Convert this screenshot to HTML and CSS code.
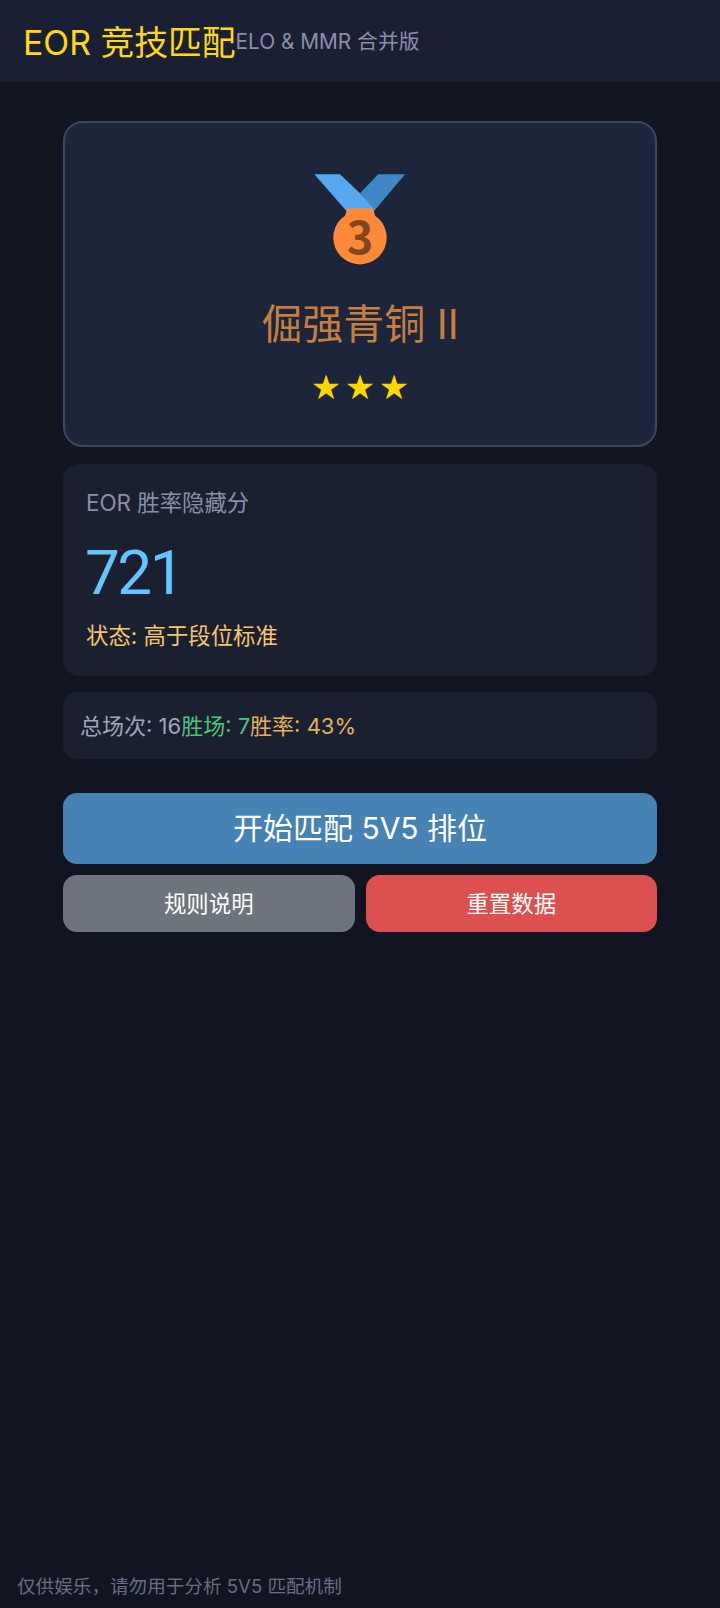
FILE: index.html
```html
<!DOCTYPE html>
<html lang="zh-CN">

<head>
  <meta charset="UTF-8">
  <meta name="viewport" content="width=device-width, initial-scale=1.0">
  <title>EOR 竞技匹配</title>
  <link rel="stylesheet" href="styles.css">
</head>

<body>
  <header class="top-bar">
    <h1 class="top-title">EOR 竞技匹配</h1>
    <span class="top-sub">ELO &amp; MMR 合并版</span>
  </header>

  <main class="main-col">
    <section class="rank-card">
      <svg class="rank-medal" viewBox="0 0 90 90" aria-hidden="true">
        <polygon points="63.3,0.3 90,0.3 58.3,38 45,19.3" fill="#3f87c4" />
        <polygon points="-0.7,0.3 25,0.3 45,19.3 58.3,34.3 58.3,38 32.3,38" fill="#55a8ee" />
        <polygon points="32.3,34.3 58.3,34.3 60,42 30,42" fill="#fd8a39" />
        <circle cx="45" cy="63.7" r="26.7" fill="#fd8a39" />
        <text class="rank-medal-num" x="45" y="79.5" text-anchor="middle">3</text>
      </svg>
      <div class="rank-name">倔强青铜 II</div>
      <div class="rank-stars">★★★</div>
    </section>

    <section class="mmr-card">
      <div class="mmr-label">EOR 胜率隐藏分</div>
      <div class="mmr-value">721</div>
      <div class="mmr-state">状态: 高于段位标准</div>
    </section>

    <section class="stat-row">
      <span class="stat-total">总场次: 16</span>
      <span class="stat-win">胜场: 7</span>
      <span class="stat-rate">胜率: 43%</span>
    </section>

    <div class="btn-group">
      <button class="btn btn-start">开始匹配 5V5 排位</button>
      <div class="btn-row">
        <button class="btn btn-rules">规则说明</button>
        <button class="btn btn-reset">重置数据</button>
      </div>
    </div>
  </main>

  <footer class="page-foot">仅供娱乐，请勿用于分析 5V5 匹配机制</footer>
</body>

</html>
```

FILE: styles.css
```css
* {
  box-sizing: border-box;
}

html,
body {
  height: 100%;
}

body {
  margin: 0;
  display: flex;
  flex-direction: column;
  background-color: #111521;
  font-family: 'Inter', 'Noto Sans CJK SC', sans-serif;
}

.top-bar {
  display: flex;
  align-items: center;
  height: 82px;
  padding: 0 23px 2px;
  background-color: #1a1f33;
}

.top-title {
  margin: 0;
  color: #ffd90f;
  font-size: 33.8px;
  font-weight: 400;
}

.top-sub {
  color: #8a8fa8;
  font-size: 20.8px;
}

.main-col {
  flex: 1;
  width: 594px;
  margin: 0 auto;
  padding-top: 39px;
}

.rank-card {
  display: flex;
  flex-direction: column;
  align-items: center;
  height: 326px;
  padding-top: 51px;
  border: 2px solid #3b4764;
  border-radius: 20px;
  background-color: #1d253b;
}

.rank-medal {
  width: 90px;
  height: 90px;
  overflow: visible;
}

.rank-medal-num {
  fill: #84461a;
  font-family: 'Noto Sans CJK SC', sans-serif;
  font-size: 45px;
  font-weight: 700;
}

.rank-name {
  margin-top: 31px;
  color: #c47f3e;
  font-size: 41px;
  line-height: 58px;
}

.rank-stars {
  margin-top: 14px;
  padding-left: 3.5px;
  color: #ffd700;
  font-size: 34px;
  letter-spacing: 3.5px;
  line-height: 40px;
  font-family: 'DejaVu Sans', sans-serif;
}

.mmr-card {
  height: 212px;
  margin-top: 17px;
  padding: 21px 23px;
  border-radius: 16px;
  background-color: #1a2030;
}

.mmr-label {
  color: #8a8fa8;
  font-size: 22.4px;
  line-height: 36px;
}

.mmr-value {
  margin-top: 12px;
  margin-left: -1px;
  color: #63c5ff;
  font-family: 'Roboto', sans-serif;
  font-size: 62px;
  letter-spacing: -2.5px;
  line-height: 80px;
}

.mmr-state {
  margin-top: 5px;
  color: #f6c667;
  font-size: 22.4px;
  line-height: 36px;
}

.stat-row {
  display: flex;
  align-items: center;
  height: 67px;
  margin-top: 16px;
  padding: 0 17px 3px;
  border-radius: 14px;
  background-color: #1a2030;
  font-size: 22px;
}

.stat-total {
  color: #a0a6bc;
}

.stat-win {
  color: #4fc27d;
}

.stat-rate {
  color: #e0b25c;
}

.btn-group {
  display: flex;
  flex-direction: column;
  gap: 11px;
  margin-top: 34px;
}

.btn-row {
  display: flex;
  gap: 11px;
}

.btn {
  border: 0;
  border-radius: 14px;
  color: #fff;
  font-family: inherit;
}

.btn-start {
  height: 71px;
  padding-bottom: 7px;
  background-color: #4682b4;
  font-size: 30px;
}

.btn-rules,
.btn-reset {
  flex: 1;
  height: 57px;
  padding-bottom: 5px;
  font-size: 22.4px;
}

.btn-rules {
  background-color: #6c757d;
}

.btn-reset {
  background-color: #dd5050;
}

.page-foot {
  height: 42px;
  padding: 5px 17px 0;
  color: #676d85;
  font-size: 18.6px;
  line-height: 30px;
}
```
